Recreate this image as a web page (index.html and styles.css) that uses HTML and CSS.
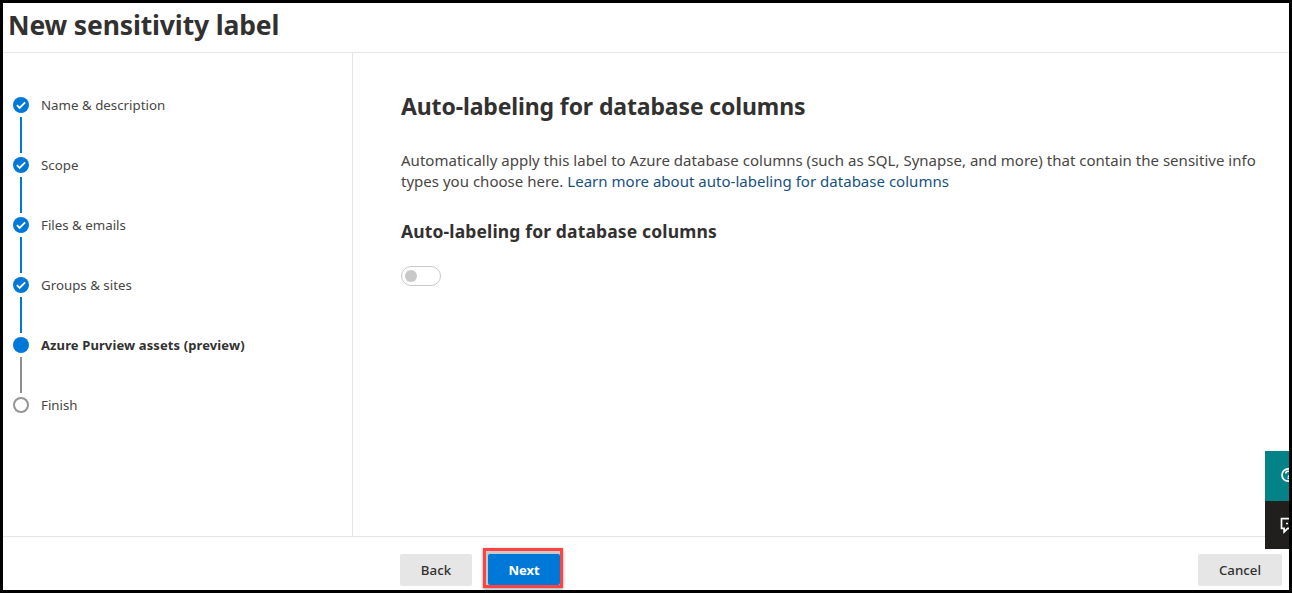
FILE: index.html
```html
<!DOCTYPE html>
<html lang="en">
<head>
<meta charset="utf-8">
<title>New sensitivity label</title>
<link rel="stylesheet" href="styles.css">
</head>
<body>
<div class="window">
  <header class="header"><h1 class="title">New sensitivity label</h1></header>
  <div class="body">
    <nav class="sidebar">
      <ol class="steps">
        <li class="step done"><span class="rail"><svg class="dot" viewBox="0 0 16 16"><circle cx="8" cy="8" r="8"/><path d="M3.900 8.200l2.700 2.700 5.500-5.600"/></svg></span><span class="label">Name &amp; description</span></li>
        <li class="step done"><span class="rail"><svg class="dot" viewBox="0 0 16 16"><circle cx="8" cy="8" r="8"/><path d="M3.900 8.200l2.700 2.700 5.500-5.600"/></svg></span><span class="label">Scope</span></li>
        <li class="step done"><span class="rail"><svg class="dot" viewBox="0 0 16 16"><circle cx="8" cy="8" r="8"/><path d="M3.900 8.200l2.700 2.700 5.500-5.600"/></svg></span><span class="label">Files &amp; emails</span></li>
        <li class="step done"><span class="rail"><svg class="dot" viewBox="0 0 16 16"><circle cx="8" cy="8" r="8"/><path d="M3.900 8.200l2.700 2.700 5.500-5.600"/></svg></span><span class="label">Groups &amp; sites</span></li>
        <li class="step current"><span class="rail"><svg class="dot" viewBox="0 0 16 16"><circle cx="8" cy="8" r="8"/></svg></span><span class="label">Azure Purview assets (preview)</span></li>
        <li class="step pending"><span class="rail"><svg class="dot" viewBox="0 0 16 16"><circle cx="8" cy="8" r="7"/></svg></span><span class="label">Finish</span></li>
      </ol>
    </nav>
    <main class="content">
      <h2 class="heading">Auto-labeling for database columns</h2>
      <p class="text"><span class="line">Automatically apply this label to Azure database columns (such as SQL, Synapse, and more) that contain the sensitive info</span> <span class="line">types you choose here. <a class="link">Learn more about auto-labeling for database columns</a></span></p>
      <h3 class="subheading">Auto-labeling for database columns</h3>
      <div class="toggle"><span class="knob"></span></div>
    </main>
  </div>
  <footer class="footer">
    <button class="btn back">Back</button>
    <span class="highlight"><button class="btn next">Next</button></span>
    <button class="btn cancel">Cancel</button>
  </footer>
  <div class="dock">
    <div class="dock-item help"><svg width="24" height="50" viewBox="0 0 24 50"><circle cx="23.2" cy="24" r="6.200"/><path d="M20.800 22.500c0-3 5-3 5 0 0 2-2.500 2-2.500 4M23.300 27v1"/></svg></div>
    <div class="dock-item feedback"><svg width="24" height="48" viewBox="0 0 24 48"><path d="M30 17.700H16.500v9.600h2.600v3.600l3.600-3.600H30"/><path d="M21 22.500h2"/></svg></div>
  </div>
</div>
</body>
</html>
```
FILE: styles.css
```css
* { box-sizing: border-box; }
body { margin: 0; font-family: "Noto Sans", "Open Sans", sans-serif; color: #323130; }
h1, h2, h3, p, ol { margin: 0; padding: 0; }
.window { position: relative; display: flex; flex-direction: column; width: 1292px; height: 593px; border: 3px solid #000; background: #fff; overflow: hidden; }
.header { height: 50px; flex: none; border-bottom: 1px solid #e5e5e5; padding: 3px 0 0 5px; }
.title { font-size: 26.500px; line-height: 38px; font-weight: 700; letter-spacing: -0.140px; white-space: nowrap; }
.body { flex: 1; display: flex; min-height: 0; }
.sidebar { width: 350px; border-right: 1px solid #e5e5e5; padding: 42px 0 0 10px; }
.steps { list-style: none; }
.step { display: flex; height: 60px; gap: 12px; }
.rail { display: flex; flex-direction: column; align-items: center; gap: 4px; padding-top: 2px; width: 16px; }
.rail::after { content: ""; width: 2px; height: 36px; background: #0078d7; }
.current .rail::after { background: #8f8f8f; }
.pending .rail::after { display: none; }
.dot { display: block; width: 16px; height: 16px; flex: none; fill: #0078d7; }
.dot path { fill: none; stroke: #fff; stroke-width: 1.8; }
.pending .dot { fill: #fff; stroke: #949494; stroke-width: 2; }
.label { font-size: 13.300px; line-height: 20px; white-space: nowrap; color: #484644; }
.current .label { font-size: 13px; font-weight: 700; letter-spacing: 0.110px; color: #323130; }
.content { flex: 1; padding: 37px 0 0 48px; }
.heading { font-size: 23px; line-height: 32px; font-weight: 700; letter-spacing: -0.130px; white-space: nowrap; }
.text { margin-top: 28px; font-size: 15px; line-height: 21px; letter-spacing: 0.017px; color: #484644; }
.line { display: block; white-space: nowrap; }
.link { color: #17527f; }
.subheading { margin-top: 26px; font-size: 17.500px; line-height: 26px; font-weight: 700; letter-spacing: 0.140px; }
.toggle { display: flex; align-items: center; width: 40px; height: 20px; margin-top: 22px; padding-left: 3px; border: 1px solid #c8c8c8; border-radius: 10px; }
.knob { width: 12px; height: 12px; border-radius: 50%; background: #c8c8c8; }
.footer { display: flex; height: 54px; flex: none; border-top: 1px solid #e5e5e5; padding: 11px 7px 0 397px; }
.btn { height: 32px; margin: 6px 0 0; padding: 0; border: 0; border-radius: 2px; background: #e6e6e6; color: #323130; font: 500 13.300px/32px "Noto Sans", sans-serif; }
.back { width: 72px; }
.highlight { display: block; width: 80px; height: 40px; margin-left: 11px; border: 3px solid #ff4343; padding: 2px 0 0 2px; background: #c8c8c8; box-shadow: 0 1px 3px rgba(0,0,0,.4); }
.next { display: block; width: 72px; height: 31px; margin: 1px 0 0; background: #0078d7; color: #fff; font-weight: 700; font-size: 13px; }
.cancel { width: 84px; margin-left: auto; }
.dock { position: absolute; right: 0; top: 448px; width: 24px; }
.dock-item svg { display: block; fill: none; stroke: #fff; stroke-width: 1.7; }
.help { height: 50px; background: #038387; }
.feedback { height: 48px; background: #201f1e; }
```
